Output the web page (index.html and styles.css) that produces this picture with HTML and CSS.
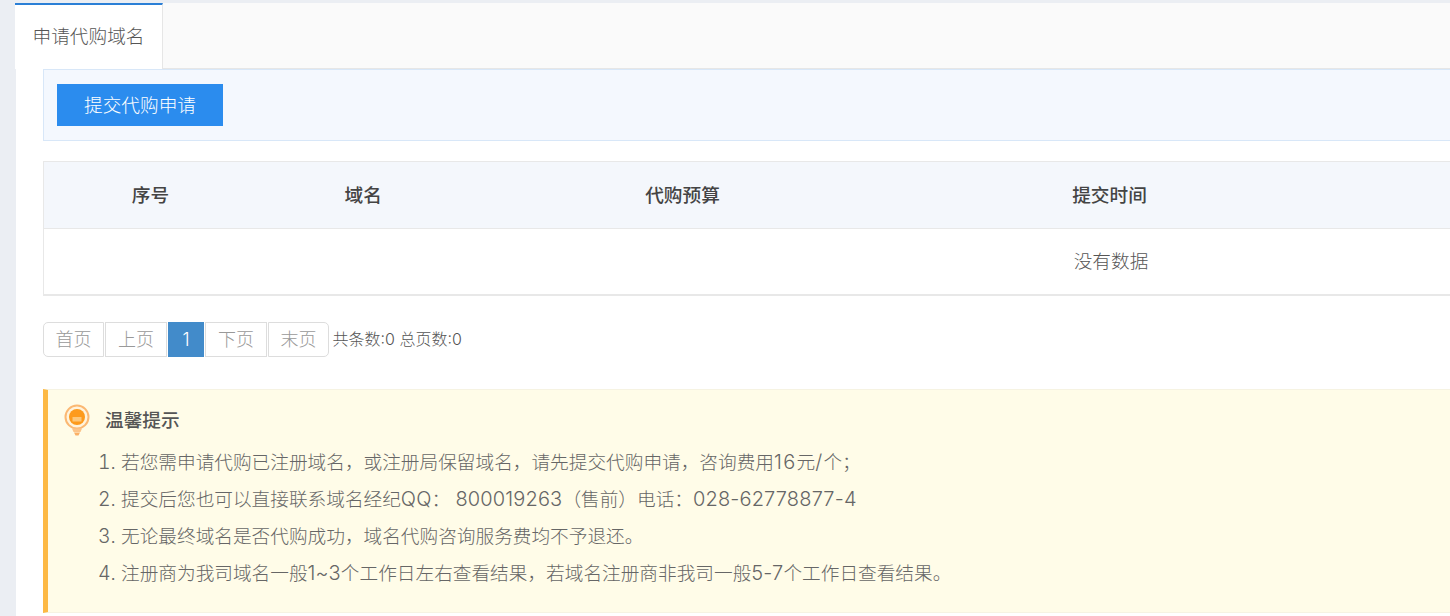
FILE: index.html
```html
<!DOCTYPE html>
<html lang="zh-CN">
<head>
    <meta charset="UTF-8">
    <title>申请代购域名</title>
    <link rel="stylesheet" href="styles.css">
</head>
<body>
    <div class="main">
        <div class="tabs">
            <div class="tab active">申请代购域名</div>
        </div>
        <div class="content">
            <div class="toolbar">
                <a class="btn">提交代购申请</a>
            </div>
            <table class="data-table">
                <thead>
                    <tr>
                        <th class="col-id">序号</th>
                        <th class="col-name">域名</th>
                        <th class="col-budget">代购预算</th>
                        <th class="col-time">提交时间</th>
                        <th class="col-rest"></th>
                    </tr>
                </thead>
                <tbody>
                    <tr><td colspan="5">没有数据</td></tr>
                </tbody>
            </table>
            <div class="pager">
                <a class="page first">首页</a>
                <a class="page">上页</a>
                <a class="page current">1</a>
                <a class="page">下页</a>
                <a class="page last">末页</a>
                <span class="pager-info">共条数:0 总页数:0</span>
            </div>
            <div class="tips">
                <div class="tips-title">
                    <svg class="bulb" width="28" height="32" viewBox="0 0 28 32">
                        <circle cx="14" cy="13" r="11.5" fill="#fff3dc" stroke="#fbb873" stroke-width="2"/>
                        <circle cx="14" cy="13" r="8" fill="#fd9a1c"/>
                        <path d="M9.5 13h9v4.5h-9z" fill="#fdc678"/>
                        <path d="M9 24.5h10l-1.5 3.5h-7z" fill="#fcc48a"/>
                        <path d="M11 28.5h6l-1.5 3h-3z" fill="#fbb066"/>
                    </svg>
                    <span class="tips-label">温馨提示</span>
                </div>
                <ol class="tips-list">
                    <li>若您需申请代购已注册域名，或注册局保留域名，请先提交代购申请，咨询费用<span class="num wide">16</span>元<span class="num wide">/</span>个；</li>
                    <li>提交后您也可以直接联系域名经纪<span class="num">QQ</span>： <span class="num">800019263</span>（售前）电话：<span class="num">028-62778877-4</span></li>
                    <li>无论最终域名是否代购成功，域名代购咨询服务费均不予退还。</li>
                    <li>注册商为我司域名一般<span class="num">1~3</span>个工作日左右查看结果，若域名注册商非我司一般<span class="num">5-7</span>个工作日查看结果。</li>
                </ol>
            </div>
        </div>
    </div>
</body>
</html>
```

FILE: styles.css
```css
html, body {
    margin: 0;
    padding: 0;
    height: 616px;
    overflow: hidden;
}

body {
    background-color: #ebeef3;
    font-family: "Inter", "Noto Sans CJK SC", sans-serif;
    font-weight: 300;
    color: #666;
}

.main {
    width: 2180px;
    height: 613px;
    margin: 3px 0 0 16px;
    background-color: #fff;
}

.tabs {
    display: flex;
    height: 66px;
    box-sizing: border-box;
    background-color: #fafafa;
    border-bottom: 1px solid #e6e6e6;
}

.tab {
    width: 148px;
    height: 66px;
    margin-left: -1px;
    box-sizing: border-box;
    border-top: 2px solid #2b7fd6;
    border-right: 1px solid #e6e6e6;
    background-color: #fff;
    font-size: 18.67px;
    line-height: 64px;
    text-align: center;
    color: #555;
}

.content {
    padding-left: 27px;
    width: 2136px;
}

.toolbar {
    height: 72px;
    box-sizing: border-box;
    padding: 14px 13px;
    background-color: #f4f8fe;
    border: 1px solid #d8e7f8;
}

.btn {
    display: block;
    width: 166px;
    height: 42px;
    background-color: #2b8cee;
    color: #fff;
    font-size: 18.67px;
    line-height: 44px;
    text-align: center;
}

.data-table {
    width: 100%;
    margin-top: 20px;
    border-collapse: collapse;
    table-layout: fixed;
    border: 1px solid #e8e8e8;
    border-bottom-width: 2px;
}

.data-table th {
    height: 67px;
    box-sizing: border-box;
    padding: 0 0 4px;
    background-color: #f4f7fc;
    border-bottom: 1px solid #e8e8e8;
    font-size: 18.67px;
    font-weight: 500;
    color: #444;
}

.data-table td {
    height: 61px;
    padding: 0 0 4px;
    text-align: center;
    font-size: 18.67px;
    color: #555;
}

.col-id, .col-name { width: 10%; }
.col-budget { width: 20%; }
.col-time { width: 20%; }
.data-table .col-name { padding-right: 1px; }
.data-table .col-budget, .data-table .col-time { padding-right: 3px; }

.pager {
    display: flex;
    align-items: center;
    margin-top: 26px;
    height: 35px;
    gap: 1px;
}

.page {
    width: 62px;
    height: 35px;
    box-sizing: border-box;
    border: 1px solid #ddd;
    color: #999;
    font-size: 18px;
    line-height: 33px;
    text-align: center;
}

.first { width: 61px; border-radius: 5px 0 0 5px; }
.last { width: 61px; border-radius: 0 5px 5px 0; }

.current {
    width: 36px;
    background-color: #428bca;
    border-color: #428bca;
    color: #fff;
}

.pager-info {
    margin-left: 2.5px;
    padding-bottom: 3px;
    font-size: 16px;
    color: #555;
}

.tips {
    margin-top: 32px;
    height: 224px;
    box-sizing: border-box;
    background-color: #fffce8;
    border: 1px solid #f6f3e2;
    border-left: 5px solid #fdb944;
}

.tips-title {
    display: flex;
    align-items: center;
    gap: 14px;
    height: 30px;
    padding: 15px 0 0 15px;
    font-size: 18.67px;
    font-weight: 500;
    color: #555;
}

.tips-label {
    margin-bottom: 4px;
}

.tips-list {
    margin: 9px 0 0;
    padding-left: 73px;
    font-size: 18.67px;
    line-height: 37px;
    color: #666;
}

.tips-list li::marker {
    font-size: 19.5px;
}

.num {
    font-size: 20px;
    letter-spacing: 0.15px;
}

.wide {
    letter-spacing: 1.3px;
}
```
